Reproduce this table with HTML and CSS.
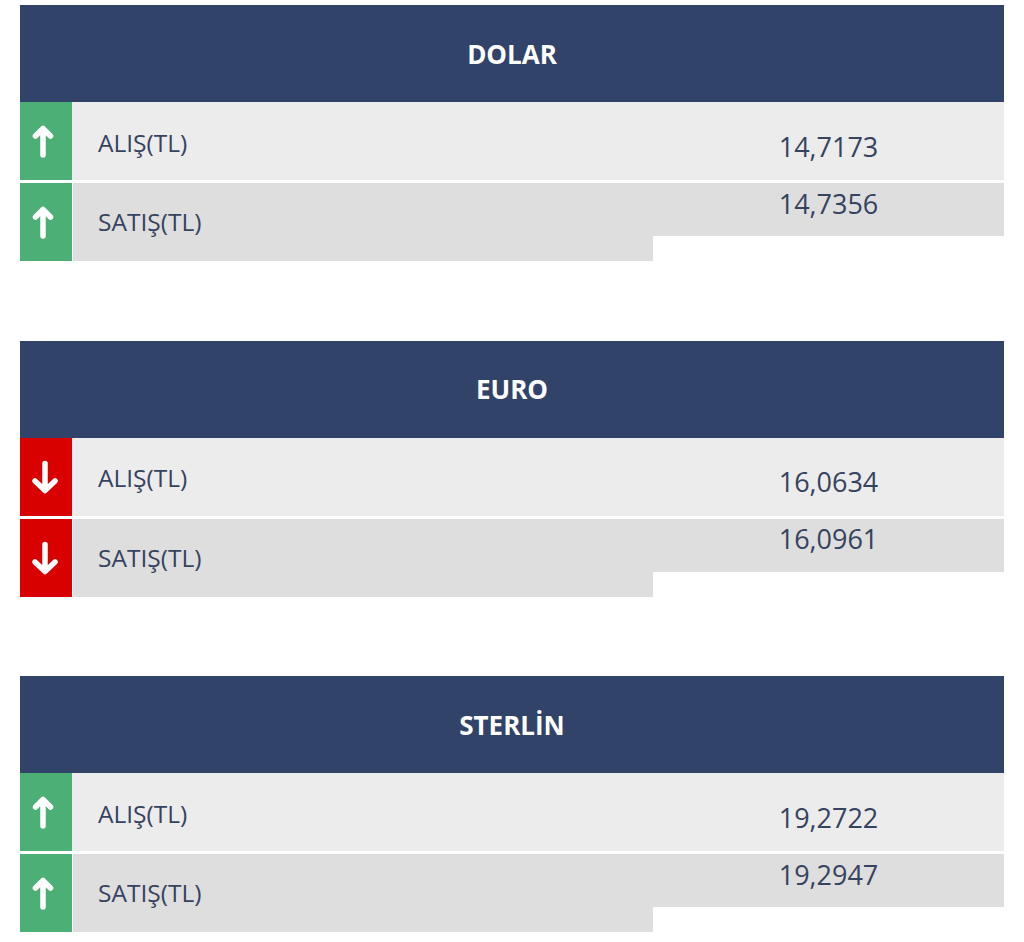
FILE: index.html
```html
<!DOCTYPE html>
<html lang="tr">
<head>
<meta charset="utf-8">
<title>Döviz Kurları</title>
<link rel="stylesheet" href="styles.css">
</head>
<body>
<main class="page">

  <section class="rate">
    <h2 class="rate-title">DOLAR</h2>
    <div class="row row-buy">
      <div class="icon up"><svg width="24" height="34" viewBox="0 0 24 34"><path d="M12 4.5V31M4.5 12L12 4.5L19.5 12" fill="none" stroke="#fff" stroke-width="5.5" stroke-linecap="round" stroke-linejoin="round"/></svg></div>
      <div class="label">ALIŞ(TL)</div>
      <div class="value">14,7173</div>
    </div>
    <div class="row row-sell">
      <div class="icon up"><svg width="24" height="34" viewBox="0 0 24 34"><path d="M12 4.5V31M4.5 12L12 4.5L19.5 12" fill="none" stroke="#fff" stroke-width="5.5" stroke-linecap="round" stroke-linejoin="round"/></svg></div>
      <div class="label">SATIŞ(TL)</div>
      <div class="value">14,7356</div>
    </div>
  </section>

  <section class="rate">
    <h2 class="rate-title">EURO</h2>
    <div class="row row-buy">
      <div class="icon down"><svg width="28" height="34" viewBox="0 0 28 34"><path d="M14 3.5V29.5M4 21L14 30.5L24 21" fill="none" stroke="#fff" stroke-width="5.5" stroke-linecap="round" stroke-linejoin="round"/></svg></div>
      <div class="label">ALIŞ(TL)</div>
      <div class="value">16,0634</div>
    </div>
    <div class="row row-sell">
      <div class="icon down"><svg width="28" height="34" viewBox="0 0 28 34"><path d="M14 3.5V29.5M4 21L14 30.5L24 21" fill="none" stroke="#fff" stroke-width="5.5" stroke-linecap="round" stroke-linejoin="round"/></svg></div>
      <div class="label">SATIŞ(TL)</div>
      <div class="value">16,0961</div>
    </div>
  </section>

  <section class="rate">
    <h2 class="rate-title">STERLİN</h2>
    <div class="row row-buy">
      <div class="icon up"><svg width="24" height="34" viewBox="0 0 24 34"><path d="M12 4.5V31M4.5 12L12 4.5L19.5 12" fill="none" stroke="#fff" stroke-width="5.5" stroke-linecap="round" stroke-linejoin="round"/></svg></div>
      <div class="label">ALIŞ(TL)</div>
      <div class="value">19,2722</div>
    </div>
    <div class="row row-sell">
      <div class="icon up"><svg width="24" height="34" viewBox="0 0 24 34"><path d="M12 4.5V31M4.5 12L12 4.5L19.5 12" fill="none" stroke="#fff" stroke-width="5.5" stroke-linecap="round" stroke-linejoin="round"/></svg></div>
      <div class="label">SATIŞ(TL)</div>
      <div class="value">19,2947</div>
    </div>
  </section>

</main>
</body>
</html>
```

FILE: styles.css
```css
html, body {
  margin: 0;
  padding: 0;
  background: #ffffff;
}

body {
  font-family: "Open Sans", "Noto Sans", "Liberation Sans", sans-serif;
  color: #36435f;
}

.page {
  display: flex;
  flex-direction: column;
  gap: 79.5px;
  padding: 5px 20px 0 20px;
}

.rate {
  display: flex;
  flex-direction: column;
}

.rate-title {
  margin: 0;
  height: 97px;
  background: #314369;
  color: #ffffff;
  font-size: 26px;
  font-weight: 700;
  display: flex;
  align-items: center;
  justify-content: center;
}

.row {
  display: flex;
  align-items: flex-start;
}

.row-buy {
  height: 78px;
  background: #ececec;
}

.row-sell {
  margin-top: 3px;
}

.icon {
  width: 52px;
  height: 78px;
  flex: none;
  display: flex;
  align-items: center;
  justify-content: center;
  box-sizing: border-box;
  margin-right: 1px;
}

.icon.up {
  background: #4caf76;
  padding-right: 6px;
}

.icon.down {
  background: #d90000;
  padding-right: 2px;
}

.icon svg {
  display: block;
}

.label {
  width: 580px;
  height: 78px;
  flex: none;
  display: flex;
  align-items: center;
  padding-left: 25px;
  font-size: 24.5px;
  box-sizing: border-box;
}

.row-buy .label {
  padding-top: 2px;
}

.row-sell .label {
  background: #dedede;
  padding-bottom: 1px;
}

.value {
  flex: 1;
  display: flex;
  justify-content: center;
  align-items: center;
  font-size: 27px;
  box-sizing: border-box;
}

.row-buy .value {
  height: 78px;
  padding-top: 10px;
}

.row-sell .value {
  height: 53px;
  background: #dedede;
  padding-bottom: 13px;
}
```
